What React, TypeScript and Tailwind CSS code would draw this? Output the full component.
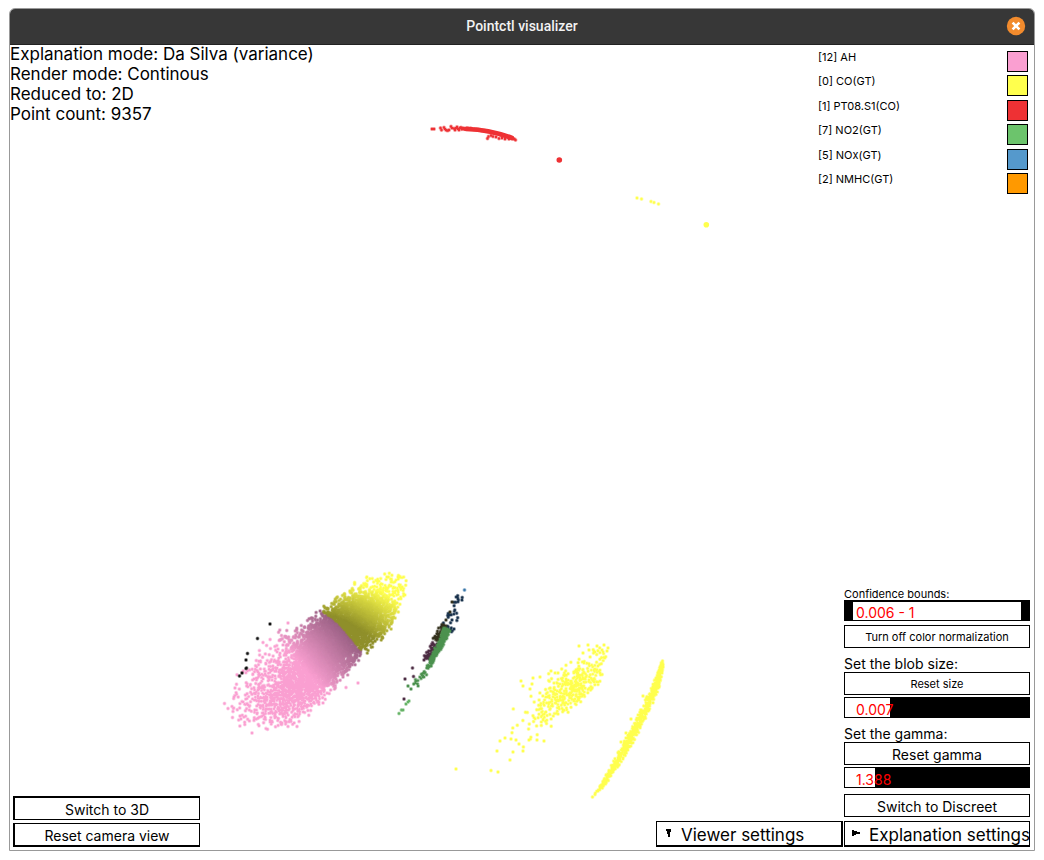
import { useState } from "react";

type Bucket = { color: string; d: string };
type Point = [number, number];

function makeRandom(seed: number) {
  let s = seed;
  return () => {
    s = (s + 0x6d2b79f5) | 0;
    let t = Math.imul(s ^ (s >>> 15), 1 | s);
    t = (t + Math.imul(t ^ (t >>> 7), 61 | t)) ^ t;
    return ((t ^ (t >>> 14)) >>> 0) / 4294967296;
  };
}

function makeGauss(rand: () => number) {
  return () => Math.sqrt(-2 * Math.log(rand() + 1e-9)) * Math.cos(2 * Math.PI * rand());
}

function dots(points: Point[]) {
  return points.map(([x, y]) => `M${x.toFixed(1)} ${y.toFixed(1)}h.01`).join("");
}

function mix(a: number[], b: number[], t: number) {
  return `rgb(${a.map((v, i) => Math.round(v + (b[i] - v) * t)).join(",")})`;
}

function at(line: Point[], t: number): Point {
  const p = t * (line.length - 1);
  const i = Math.min(line.length - 2, Math.floor(p));
  const f = p - i;
  return [
    line[i][0] + (line[i + 1][0] - line[i][0]) * f,
    line[i][1] + (line[i + 1][1] - line[i][1]) * f,
  ];
}

// Half widths of the main cloud at a distance u along its axis.
const UPPER: Point[] = [
  [-114, 12], [-95, 34], [-70, 43], [-45, 45], [-15, 44], [10, 38], [30, 35], [58, 38], [80, 32], [98, 20], [107, 10],
];
const LOWER: Point[] = [
  [-114, 8], [-95, 26], [-80, 36], [-60, 42], [-15, 39], [10, 33], [28, 28], [50, 29], [67, 25], [80, 17], [98, 7], [107, 1],
];

function halfWidth(shape: Point[], u: number) {
  for (let i = 1; i < shape.length; i++) {
    const [u0, w0] = shape[i - 1];
    const [u1, w1] = shape[i];
    if (u >= u0 && u <= u1) return w0 + ((w1 - w0) * (u - u0)) / (u1 - u0);
  }
  return 0;
}

function mainCloud(): Bucket[] {
  const rand = makeRandom(7);
  const gauss = makeGauss(rand);
  const STEPS = 56;
  const pink: Point[][] = Array.from({ length: STEPS + 1 }, () => []);
  const yellow: Point[][] = Array.from({ length: STEPS + 1 }, () => []);
  for (let n = 0; n < 7000; n++) {
    const sparse = n % 6 === 0;
    const u = sparse ? -30 + gauss() * 58 : 10 + gauss() * 40;
    const skew = u < 10 ? Math.min(13, (10 - u) * 0.2) : 0;
    const v = sparse ? gauss() * 22 : skew - 1 + gauss() * 14;
    const limit = halfWidth(v > 0 ? LOWER : UPPER, u);
    if (Math.abs(v) > limit * (0.8 + rand() * 0.24)) continue;
    const x = 325 + u * 0.78 + v * 0.63;
    const y = 650 - u * 0.63 + v * 0.78;
    const edge = 28 - (v < 0 ? 0.006 * v * v : 0);
    const d = u - edge;
    const jitter = rand() * 0.04 - 0.02;
    if (d > 0) {
      const t = Math.min(1, Math.max(0, (d - 8 - v * 0.35) / 48 + jitter));
      yellow[Math.round(t * STEPS)].push([x, y]);
    } else {
      const t = Math.min(1, Math.max(0, (-d + 2) / 56 + jitter));
      pink[Math.round(t * STEPS)].push([x, y]);
    }
  }
  return [
    ...pink.map((p, i) => ({ color: mix([153, 96, 131], [250, 159, 209], i / STEPS), d: dots(p) })).reverse(),
    ...yellow.map((p, i) => ({ color: mix([143, 143, 42], [255, 255, 77], i / STEPS), d: dots(p) })).reverse(),
  ];
}

function along(seed: number, n: number, line: Point[], spread: (t: number) => number, pick: (r: number) => number = (r) => r) {
  const rand = makeRandom(seed);
  const gauss = makeGauss(rand);
  const out: Point[] = [];
  for (let i = 0; i < n; i++) {
    const t = pick(rand());
    const [x, y] = at(line, t);
    const s = spread(t);
    const g = Math.max(-2, Math.min(2, gauss()));
    out.push([x + g * s, y + g * s * 0.45]);
  }
  return out;
}

function yellowCloud(): Point[] {
  const gauss = makeGauss(makeRandom(33));
  const out: Point[] = [
    [456, 769], [491, 770.5], [498, 772], [510, 760], [497, 751], [513, 752], [521, 681], [523, 686],
    [530, 689], [532, 684], [533, 678], [540, 677], [551, 671], [558, 673], [579, 646], [588, 645],
    [597, 646], [604, 645], [608, 648], [607, 651], [602, 650], [595, 652], [583, 653], [589, 650],
    [500, 741], [505, 738], [511, 739], [516, 740], [519, 744], [523, 751], [529, 740], [537, 740], [544, 741],
  ];
  for (let i = 0; i < 480; i++) {
    const u = gauss() * (i % 4 ? 24 : 42);
    const v = gauss() * (i % 4 ? 8.5 : 14);
    const x = 571 + u * 0.76 + v * 0.6;
    const y = 689 - u * 0.65 + v * 0.76;
    if (x > 608 - Math.max(0, y - 652) * 0.22 || y < 645 || v < -27 || v > 17 || x < 500 || u < -78) continue;
    out.push([x, y]);
  }
  return out;
}

const GREEN: Point[] = [[402, 709], [411, 693], [421, 677], [430, 664], [438, 649], [444, 637], [447, 629]];
const ARC: Point[] = [[593, 798], [606, 780], [617, 762], [628, 743], [638, 724], [648, 704], [656, 686], [660, 672], [663, 661]];
const RED: Point[] = [[460, 128.5], [468, 128.5], [478, 129.5], [488, 131.5], [498, 134], [507, 136.5], [514, 139]];

const BUCKETS: Bucket[] = [
  ...mainCloud(),
  { color: "#fa9fd1", d: dots([[224.5, 703.5], [228, 708.5], [232.5, 717.5], [240, 716], [252, 733], [235, 688], [297, 726.5], [263, 642.5], [288, 623], [358, 683], [346, 687.5]]) },
  { color: "#111111", d: dots([[270, 624], [257.5, 638.5], [247.5, 653.5], [246, 660], [246.5, 668], [246, 668.5], [242, 673], [239.5, 676]]) },
  { color: "#18314b", d: dots([...along(5, 42, [[447, 630], [450, 623], [454, 613], [457, 602], [460, 596]], (t) => 3 - t * 1.4, (r) => r * r), [462, 600], [454, 629]]) },
  { color: "#33301c", d: dots([...along(6, 50, [[436, 640], [440, 633], [444, 624]], () => 1.5), [446, 620], [450, 612], [452, 602]]) },
  { color: "#4b2b42", d: dots([...along(8, 75, [[427, 659], [431, 653], [437, 643]], () => 1.8), [412.5, 668], [413.5, 676.5], [405, 679], [404, 699], [424, 660]]) },
  { color: "#4b914e", d: dots([...along(9, 380, GREEN, (t) => 0.4 + t * 1.2, (r) => 0.3 + 0.7 * Math.sqrt(r)), ...along(19, 40, GREEN, () => 1.5, (r) => 0.25 + r * 0.5), [408, 686], [411, 689]]) },
  { color: "#65b366", d: dots([[399, 713.5], [401.5, 710], [403, 710], [406, 704], [408, 702], [409, 701]]) },
  { color: "#3776a9", d: dots([[464.5, 590]]) },
  { color: "#ffff4d", d: dots([...yellowCloud(), ...along(11, 760, ARC, (t) => 0.4 + Math.sin(t * Math.PI) * 1.6, (r) => 0.07 + r * 0.91), ...along(12, 24, ARC, () => 0.8), [592.5, 797], [595, 794.5], [598, 791], [600, 788.5], [631, 719], [626, 733], [621, 742], [643, 696]]) },
  { color: "#ffff4d", d: dots([[637, 198], [641.5, 199], [651, 201.5], [654, 202.5], [658.5, 204]]) },
  { color: "#ee3134", d: dots([[432, 129], [434, 129], [440.5, 128], [441.5, 130], [444, 127.5], [445, 129], [447, 130.5], [449, 130], [451, 126.5], [452, 128], [454, 128.5], [455, 130], [457, 127], [458, 129], [459, 130], [461, 127.5], [446, 130], [448, 130.5], [456, 128], [460, 128], ...along(14, 150, RED, () => 0.8), [487.5, 138.5], [488.5, 136.5], [491, 135.5], [493, 136.5], [496, 137], [499, 138.5], [502, 138], [505, 139], [509, 139], [515.5, 140]]) },
];

const LEGEND = [
  { label: "[12] AH", swatch: "bg-[#fa9fd1]" },
  { label: "[0] CO(GT)", swatch: "bg-[#ffff4d]" },
  { label: "[1] PT08.S1(CO)", swatch: "bg-[#ee3134]" },
  { label: "[7] NO2(GT)", swatch: "bg-[#6cc46c]" },
  { label: "[5] NOx(GT)", swatch: "bg-[#5599cc]" },
  { label: "[2] NMHC(GT)", swatch: "bg-[#ff9900]" },
];

function PointCloud() {
  return (
    <svg className="absolute inset-0 h-full w-full" viewBox="10 45 1024 805" role="img" aria-label="Projected points">
      {BUCKETS.map((b, i) => (
        <g key={i} stroke={b.color} strokeLinecap="round" fill="none">
          <path d={b.d} strokeWidth="4" strokeOpacity="0.45" />
          <path d={b.d} strokeWidth="2.4" />
        </g>
      ))}
      <path d="M466 129C484 129.5 499 133 512 138" stroke="#ee3134" strokeWidth="4.6" strokeLinecap="round" fill="none" />
      <circle cx="559.3" cy="160" r="2.8" fill="#ee3134" />
      <circle cx="706.3" cy="224.7" r="2.8" fill="#ffff4d" />
    </svg>
  );
}

function Action({ children, className }: { children: string; className: string }) {
  return (
    <button type="button" className={`flex w-full items-center justify-center border-black bg-white pt-0.5 whitespace-nowrap ${className}`}>
      {children}
    </button>
  );
}

function Slider({ id, max, initial }: { id: string; max: number; initial: number }) {
  const [value, setValue] = useState(initial);
  return (
    <div className="relative flex h-[21px] items-center border border-black bg-black">
      <div className="h-full bg-white" style={{ width: `${(value / max) * 100}%` }} />
      <span className="absolute top-1 left-[11px] text-sm leading-4 text-[#ff0000]">{value}</span>
      <input
        id={id}
        type="range"
        min={0}
        max={max}
        step={0.001}
        value={value}
        onChange={(e) => setValue(Number(e.target.value))}
        className="absolute inset-0 h-full w-full cursor-pointer opacity-0"
      />
    </div>
  );
}

function BoundsSlider() {
  const [low, setLow] = useState(0.006);
  const [high, setHigh] = useState(1);
  return (
    <div className="relative h-[21px] border-x-8 border-t-2 border-b border-black bg-black px-px">
      <div className="h-full bg-white" style={{ marginLeft: `${(low - 0.006) * 100}%`, width: `${(high - low + 0.006) * 100}%` }} />
      <span className="absolute top-[3px] left-1 text-sm leading-4 text-[#ff0000]">
        {low} - {high}
      </span>
      <input id="bound-low" type="range" min={0} max={1} step={0.001} value={low} onChange={(e) => setLow(Math.min(high, Number(e.target.value)))} className="absolute inset-y-0 left-0 h-full w-1/2 cursor-pointer opacity-0" />
      <input aria-label="Upper confidence bound" type="range" min={0} max={1} step={0.001} value={high} onChange={(e) => setHigh(Math.max(low, Number(e.target.value)))} className="absolute inset-y-0 right-0 h-full w-1/2 cursor-pointer opacity-0" />
    </div>
  );
}

export default function App() {
  return (
    <div className="flex min-h-screen flex-col bg-white px-[9px] pt-2 pb-[9px] font-['Inter','Liberation_Sans',sans-serif] text-black">
      <div className="flex flex-1 flex-col overflow-hidden rounded-t-md border border-[#999999]">
        <header className="relative flex h-9 items-center justify-center border-b border-[#222222] bg-[#373737] pb-0.5">
          <h1 className="font-['Roboto','Noto_Sans',sans-serif] text-sm font-medium text-[#f2f2f2]">Pointctl visualizer</h1>
          <button type="button" aria-label="Close" className="absolute right-2 flex size-5 items-center justify-center">
            <svg viewBox="0 0 20 20" className="size-5">
              <circle cx="10" cy="10" r="9.2" fill="#f28b2d" />
              <path d="M6.6 6.6l6.8 6.8M13.4 6.6l-6.8 6.8" stroke="white" strokeWidth="2.6" />
            </svg>
          </button>
        </header>

        <main className="relative flex flex-1 flex-col justify-between">
          <PointCloud />

          <div className="relative flex justify-between">
            <div className="-mt-px text-[17px] leading-5">
              <p>Explanation mode: Da Silva (variance)</p>
              <p>Render mode: Continous</p>
              <p>Reduced to: 2D</p>
              <p>Point count: 9357</p>
            </div>
            <ul className="mt-1.5 mr-1.5 flex h-[143px] w-[210px] flex-col justify-between">
              {LEGEND.map((item) => (
                <li key={item.label} className="flex items-start justify-between text-[11px] leading-3">
                  <span>{item.label}</span>
                  <span className={`size-[21px] border border-black ${item.swatch}`} />
                </li>
              ))}
            </ul>
          </div>

          <div className="relative flex items-end justify-between pr-1 pb-[3px] pl-[3px]">
            <div className="flex w-[187px] flex-col gap-[3px] text-sm">
              <Action className="h-6 border-t-2 border-r border-b border-l-2">Switch to 3D</Action>
              <Action className="h-6 border-t border-r border-b-2 border-l-2">Reset camera view</Action>
            </div>

            <div className="flex items-end gap-px">
              <button type="button" className="flex h-[26px] w-[187px] items-center border border-r-2 border-b-2 border-black bg-white pt-1 pl-2 text-[17px] whitespace-nowrap">
                <svg viewBox="0 0 8 10" className="mr-2 mb-1.5 h-2.5 w-2" shapeRendering="crispEdges">
                  <path d="M1 1h5v3h-1v5h-2v-3h-1v-3h-1z" />
                </svg>
                Viewer settings
              </button>

              <div className="flex w-[186px] flex-col">
                <label htmlFor="bound-low" className="text-[11px] leading-3">Confidence bounds:</label>
                <BoundsSlider />
                <Action className="mt-1 h-[23px] border text-[11px]">Turn off color normalization</Action>

                <label htmlFor="blob-size" className="mt-2 text-sm leading-4">Set the blob size:</label>
                <Action className="mb-0.5 h-[23px] border text-[11px]">Reset size</Action>
                <Slider id="blob-size" max={0.0286} initial={0.007} />

                <label htmlFor="gamma" className="mt-2 text-sm leading-4">Set the gamma:</label>
                <Action className="mb-0.5 h-[23px] border text-sm">Reset gamma</Action>
                <Slider id="gamma" max={8.5} initial={1.388} />

                <Action className="mt-1.5 mb-1 h-[23px] border text-sm">Switch to Discreet</Action>
                <button type="button" className="flex h-[26px] items-center border border-b-2 border-black bg-white pt-1 pl-[7px] text-[17px] whitespace-nowrap">
                  <svg viewBox="0 0 9 8" className="mr-2 mb-1.5 h-2 w-[9px] shrink-0" shapeRendering="crispEdges">
                    <path d="M0 1h2v1h3v1h3v2h-4v1h-2v1h-2z" />
                  </svg>
                  Explanation settings
                </button>
              </div>
            </div>
          </div>
        </main>
      </div>
    </div>
  );
}
